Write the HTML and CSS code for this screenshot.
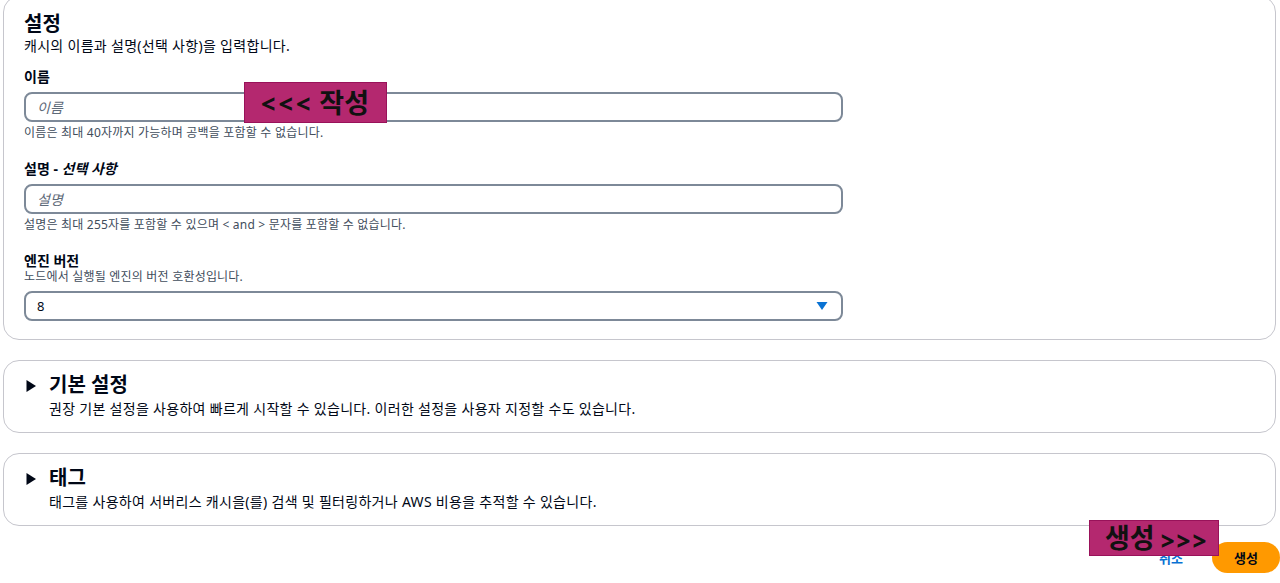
FILE: index.html
```html
<!DOCTYPE html>
<html lang="ko">
<head>
    <meta charset="UTF-8">
    <meta name="viewport" content="width=device-width, initial-scale=1.0">
    <title>캐시 생성</title>
    <link rel="stylesheet" href="styles.css">
</head>
<body>
    <div class="page">
        <!-- 설정 -->
        <section class="panel panel-settings">
            <h2 class="panel-title">설정</h2>
            <p class="panel-desc">캐시의 이름과 설명(선택 사항)을 입력합니다.</p>

            <div class="field">
                <label class="field-label" for="name">이름</label>
                <input class="text-input" id="name" type="text" placeholder="이름">
                <p class="field-hint">이름은 최대 40자까지 가능하며 공백을 포함할 수 없습니다.</p>
            </div>

            <div class="field">
                <label class="field-label" for="desc">설명 - <i>선택 사항</i></label>
                <input class="text-input" id="desc" type="text" placeholder="설명">
                <p class="field-hint">설명은 최대 255자를 포함할 수 있으며 &lt; and &gt; 문자를 포함할 수 없습니다.</p>
            </div>

            <div class="field">
                <label class="field-label tight" for="engine">엔진 버전</label>
                <p class="field-sub">노드에서 실행될 엔진의 버전 호환성입니다.</p>
                <div class="select-box" id="engine">
                    <span>8</span>
                    <svg class="caret" width="12" height="10" viewBox="0 0 12 10">
                        <path d="M0.5 1 L11.5 1 L6 9 Z" fill="#0972d3"/>
                    </svg>
                </div>
            </div>
        </section>

        <!-- 기본 설정 -->
        <section class="panel panel-expand">
            <div class="expand-head">
                <svg class="expand-icon" width="10" height="12" viewBox="0 0 10 12">
                    <path d="M0.5 0 L10 6 L0.5 12 Z" fill="#000716"/>
                </svg>
                <h2 class="panel-title">기본 설정</h2>
            </div>
            <p class="panel-desc indent">권장 기본 설정을 사용하여 빠르게 시작할 수 있습니다. 이러한 설정을 사용자 지정할 수도 있습니다.</p>
        </section>

        <!-- 태그 -->
        <section class="panel panel-expand">
            <div class="expand-head">
                <svg class="expand-icon" width="10" height="12" viewBox="0 0 10 12">
                    <path d="M0.5 0 L10 6 L0.5 12 Z" fill="#000716"/>
                </svg>
                <h2 class="panel-title">태그</h2>
            </div>
            <p class="panel-desc indent">태그를 사용하여 서버리스 캐시을(를) 검색 및 필터링하거나 AWS 비용을 추적할 수 있습니다.</p>
        </section>

        <div class="actions">
            <a class="cancel-link" href="#">취소</a>
            <button class="primary-btn" type="button">생성</button>
        </div>

        <!-- annotations -->
        <div class="note note-write"><span class="arrows">&lt;&lt;&lt;</span> 작성</div>
        <div class="note note-create">생성 <span class="arrows low">&gt;&gt;&gt;</span></div>
    </div>
</body>
</html>
```

FILE: styles.css
```css
body {
    margin: 0;
    background-color: #fff;
    color: #000716;
    font-family: "Noto Sans", "Noto Sans CJK KR", sans-serif;
    overflow: hidden;
}

.page {
    position: relative;
    padding-left: 3px;
    height: 583px;
}

.panel {
    width: 1273px;
    border: 1px solid #c6c6cd;
    border-radius: 16px;
    background: #fff;
    box-sizing: border-box;
}

.panel-settings {
    margin-top: -4px;
    padding: 16px 20px 18px 20px;
}

.panel-title {
    margin: 0;
    font-size: 20px;
    line-height: 22px;
    font-weight: 700;
}

.panel-desc {
    margin: 2px 0 0 0;
    font-size: 14px;
    line-height: 18px;
    letter-spacing: 0.3px;
}

.field {
    margin-top: 13px;
}

.field + .field {
    margin-top: 20px;
}

.field-label {
    display: block;
    font-size: 14px;
    line-height: 18px;
    font-weight: 700;
    margin-bottom: 6px;
}

.field-label.tight {
    margin-bottom: 0;
}

.field-label i {
    font-style: italic;
}

.text-input {
    display: block;
    width: 819px;
    height: 30px;
    box-sizing: border-box;
    border: 2px solid #7d8998;
    border-radius: 8px;
    padding: 0 11px;
    font-family: inherit;
    font-size: 14px;
    color: #000716;
}

.text-input::placeholder {
    color: #5f6b7a;
    font-style: italic;
}

.field-hint {
    margin: 4px 0 0 0;
    font-size: 12px;
    line-height: 14px;
    letter-spacing: 0.2px;
    color: #414d5c;
}

.field-sub {
    margin: 0 0 7px 0;
    font-size: 12px;
    line-height: 14px;
    letter-spacing: 0.2px;
    color: #414d5c;
}

.select-box {
    display: flex;
    align-items: center;
    justify-content: space-between;
    width: 819px;
    height: 30px;
    box-sizing: border-box;
    border: 2px solid #7d8998;
    border-radius: 8px;
    padding: 0 13px 0 11px;
    font-size: 13px;
}

.panel-expand {
    margin-top: 20px;
    height: 73px;
    padding: 13px 20px 0 22px;
}

.expand-head {
    display: flex;
    align-items: center;
    gap: 13px;
}

.expand-icon {
    flex: none;
    margin-top: 2px;
}

.indent {
    margin-top: 4px;
    padding-left: 23px;
}

.actions {
    display: flex;
    justify-content: flex-end;
    align-items: center;
    gap: 29px;
    margin-top: 16px;
}

.cancel-link {
    color: #0972d3;
    font-size: 13px;
    font-weight: 700;
    text-decoration: none;
}

.primary-btn {
    width: 68px;
    height: 31px;
    border: none;
    border-radius: 16px;
    background-color: #ff9900;
    color: #000716;
    font-family: inherit;
    font-size: 13px;
    font-weight: 700;
    padding: 0;
}

.note {
    position: absolute;
    background-color: #b4286f;
    border: 1px solid #99125a;
    color: #111;
    font-weight: 700;
    font-size: 27px;
    line-height: 30px;
    box-sizing: border-box;
    display: flex;
    align-items: center;
    white-space: nowrap;
}

.note .arrows {
    font-size: 25px;
    font-weight: 800;
    letter-spacing: 3px;
}

.note .arrows.low {
    font-size: 24px;
    line-height: 26px;
    position: relative;
    top: 3px;
    letter-spacing: 2px;
}

.note-write {
    left: 244px;
    top: 86px;
    width: 143px;
    height: 41px;
    padding-left: 16px;
    gap: 6px;
}

.note-create {
    left: 1089px;
    top: 524px;
    width: 130px;
    height: 36px;
    padding-left: 15px;
    gap: 6px;
}
```
